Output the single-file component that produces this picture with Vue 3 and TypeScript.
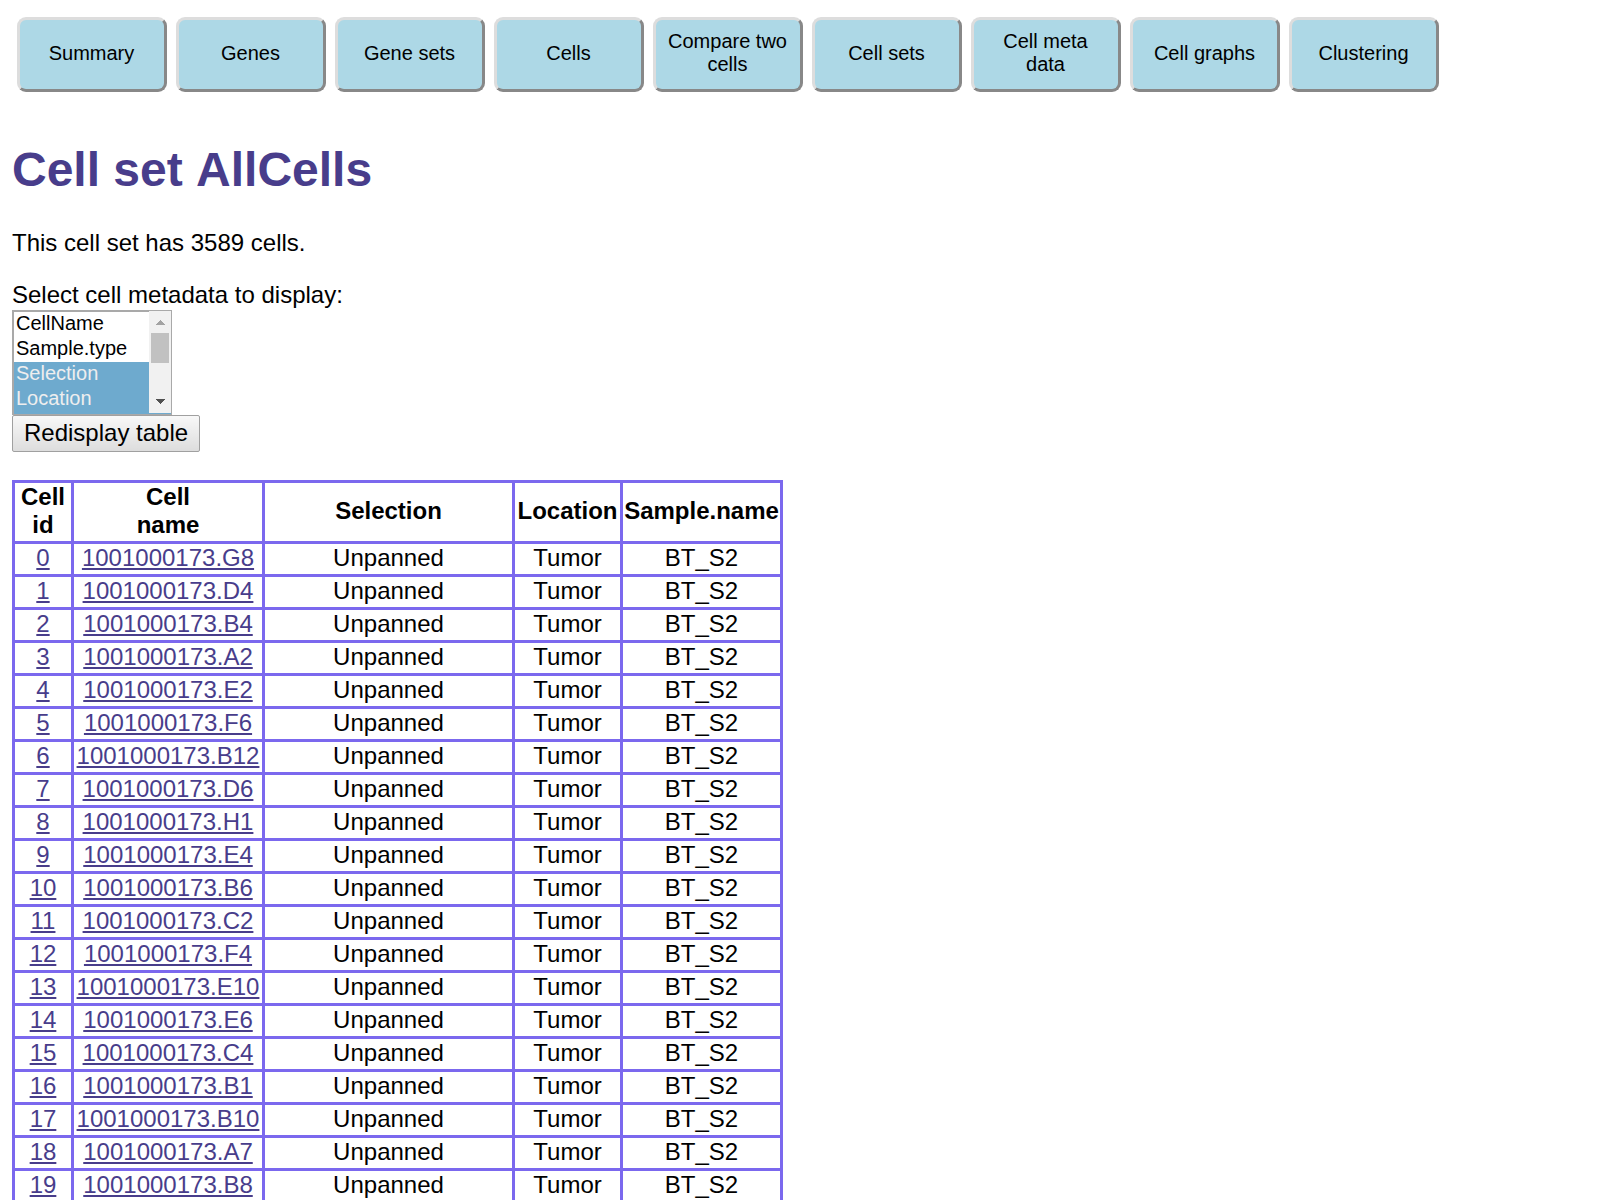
<script setup lang="ts">
import { ref } from 'vue'

interface Cell {
  id: number
  name: string
}

const pages: string[] = [
  'Summary',
  'Genes',
  'Gene sets',
  'Cells',
  'Compare two cells',
  'Cell sets',
  'Cell meta data',
  'Cell graphs',
  'Clustering',
]

const metadata: string[] = [
  'CellName',
  'Sample.type',
  'Selection',
  'Location',
  'Sample.name',
  'Plate.id',
  'Well',
  'Cluster',
]
const selected = ref<string[]>(['Selection', 'Location', 'Sample.name'])

// Scrollbar thumb: it travels from the top of the track (22) to its end (52).
const thumbTop = ref(22)
function moveThumb(event: Event): void {
  const list = event.target as HTMLSelectElement
  const range = list.scrollHeight - list.clientHeight
  thumbTop.value = 22 + (range > 0 ? Math.round((list.scrollTop / range) * 30) : 0)
}

const wells: string[] = [
  'G8', 'D4', 'B4', 'A2', 'E2', 'F6', 'B12', 'D6', 'H1', 'E4',
  'B6', 'C2', 'F4', 'E10', 'E6', 'C4', 'B1', 'B10', 'A7', 'B8',
]
const cells: Cell[] = wells.map((well, id) => ({ id, name: `1001000173.${well}` }))
</script>

<template>
  <div class="page">
    <nav class="menu">
      <button v-for="page in pages" :key="page" type="button" class="menu-button">{{ page }}</button>
    </nav>

    <h1>Cell set AllCells</h1>
    <p>This cell set has 3589 cells.</p>

    <form class="metadata-form" @submit.prevent>
      <label for="metadata">Select cell metadata to display:</label>
      <div class="list">
        <select id="metadata" v-model="selected" multiple size="4" @scroll="moveThumb">
          <option v-for="field in metadata" :key="field" :value="field">{{ field }}</option>
        </select>
        <svg class="scrollbar" viewBox="0 0 22 102" aria-hidden="true" shape-rendering="crispEdges">
          <rect width="22" height="102" fill="#f1f1f1" />
          <path d="M6 14L11 9L16 14Z" fill="#a3a3a3" />
          <rect x="2" :y="thumbTop" width="18" height="30" fill="#c1c1c1" />
          <path d="M6 88L11 93L16 88Z" fill="#505050" />
        </svg>
      </div>
      <button type="submit" class="redisplay">Redisplay table</button>
    </form>

    <table>
      <colgroup>
        <col class="col-id" />
        <col class="col-name" />
        <col class="col-selection" />
        <col class="col-location" />
        <col class="col-sample" />
      </colgroup>
      <thead>
        <tr>
          <th scope="col">Cell<br />id</th>
          <th scope="col">Cell<br />name</th>
          <th scope="col">Selection</th>
          <th scope="col">Location</th>
          <th scope="col">Sample.name</th>
        </tr>
      </thead>
      <tbody>
        <tr v-for="cell in cells" :key="cell.id">
          <td><a href="#cell">{{ cell.id }}</a></td>
          <td><a href="#cell">{{ cell.name }}</a></td>
          <td>Unpanned</td>
          <td>Tumor</td>
          <td>BT_S2</td>
        </tr>
      </tbody>
    </table>
  </div>
</template>

<style>
body {
  margin: 0;
  background: #fff;
}
</style>

<style scoped>
.page {
  padding: 17px 12px 0;
  font-family: "Liberation Sans", Arial, sans-serif;
  font-size: 24px;
  line-height: 28px;
  color: #000;
}

.menu {
  display: flex;
  flex-wrap: wrap;
  gap: 9px;
  padding-left: 5px;
}

.menu-button {
  box-sizing: border-box;
  width: 150px;
  height: 75px;
  padding: 0 9px 3px 8px;
  border: 3px solid;
  border-color: #ddd #888 #888 #ddd;
  border-radius: 9px;
  background: #add8e6;
  color: #000;
  font-family: inherit;
  font-size: 20px;
  line-height: 23px;
  text-align: center;
}

h1 {
  margin: 50px 0 31px;
  color: #483d8b;
  font-size: 48px;
  line-height: 56px;
  font-kerning: none;
}

p {
  margin: 0 0 24px;
}

.metadata-form {
  display: flex;
  flex-direction: column;
  align-items: flex-start;
  margin-bottom: 28px;
}

.list {
  position: relative;
  display: flex;
  margin-top: 1px;
}

select {
  box-sizing: border-box;
  width: 160px;
  height: 105px;
  padding: 0;
  border: 1px solid #a9a9a9;
  border-width: 2px 1px 1px 2px;
  border-radius: 0;
  outline: none;
  background: #fff;
  color: #000;
  font-family: inherit;
  font-size: 20px;
}

option {
  box-sizing: border-box;
  height: 25px;
  min-height: 25px;
  padding: 0 2px;
}

option:checked {
  background: #6eaace linear-gradient(#6eaace, #6eaace);
  color: #eee;
  -webkit-text-fill-color: #eee;
}

.scrollbar {
  position: absolute;
  top: 1px;
  right: 1px;
  width: 22px;
  height: 102px;
  pointer-events: none;
}

.redisplay {
  padding: 3px 11px 4px;
  border: 1px solid #a0a0a0;
  border-radius: 2px;
  background: linear-gradient(#f8f8f8, #ddd);
  color: #000;
  font: inherit;
}

table {
  border-collapse: collapse;
}

.col-id {
  width: 59px;
}

.col-name {
  width: 191px;
}

.col-selection {
  width: 250px;
}

.col-location {
  width: 108px;
}

.col-sample {
  width: 160px;
}

th,
td {
  padding: 0 1px 2px;
  border: 3px solid #7b68ee;
  text-align: center;
}

a {
  color: #483d8b;
}
</style>
